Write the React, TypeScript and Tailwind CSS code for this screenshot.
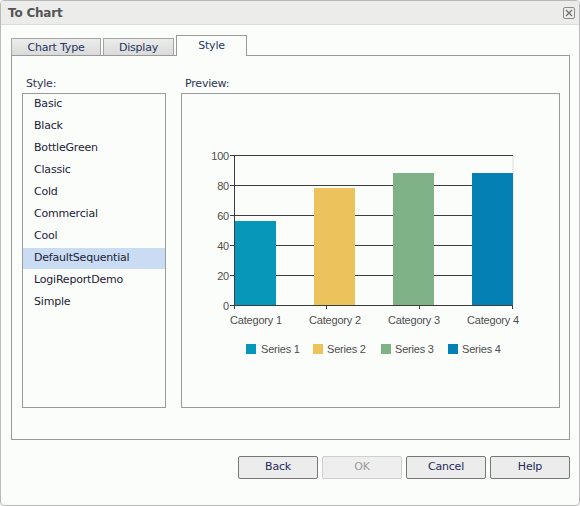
import React from 'react';

const styles = [
  'Basic',
  'Black',
  'BottleGreen',
  'Classic',
  'Cold',
  'Commercial',
  'Cool',
  'DefaultSequential',
  'LogiReportDemo',
  'Simple',
];

const bars = [
  { x: 235, value: 56, color: '#0797b9', label: 'Category 1' },
  { x: 314, value: 78, color: '#ecc25c', label: 'Category 2' },
  { x: 393, value: 88, color: '#80b287', label: 'Category 3' },
  { x: 472, value: 88, color: '#0580b4', label: 'Category 4' },
];

const legend = [
  { x: 246, tx: 261, color: '#0797b9', label: 'Series 1' },
  { x: 313, tx: 327, color: '#ecc25c', label: 'Series 2' },
  { x: 381, tx: 395, color: '#80b287', label: 'Series 3' },
  { x: 448, tx: 462, color: '#0580b4', label: 'Series 4' },
];

function Chart() {
  const y0 = 305;
  const scale = 1.5;
  return (
    <svg width="377" height="313" className="block">
      <g transform="translate(-182 -94)" fontFamily="'Liberation Sans', Arial, sans-serif" fontSize="11" fill="#4d4d4d">
        <line x1="513" y1="155" x2="513" y2="305" stroke="#dddddd" />
        {[0, 20, 40, 60, 80, 100].map((v) => {
          const y = y0 - v * scale + 0.5;
          return (
            <g key={v}>
              <line x1="230" y1={y} x2="513" y2={y} stroke="#3d3d3d" />
              <text x="229" y={y + 4} textAnchor="end">
                {v}
              </text>
            </g>
          );
        })}
        {bars.map((b) => (
          <rect key={b.label} x={b.x} y={y0 - b.value * scale} width="41" height={b.value * scale} fill={b.color} />
        ))}
        <line x1="234.5" y1="155" x2="234.5" y2="305" stroke="#3d3d3d" />
        {[234.5, 326.5, 419.5, 512.5].map((x) => (
          <line key={x} x1={x} y1="305" x2={x} y2="309" stroke="#3d3d3d" />
        ))}
        {bars.map((b) => (
          <text key={b.label} x={b.x + 21} y="324" textAnchor="middle">
            {b.label}
          </text>
        ))}
        {legend.map((l) => (
          <g key={l.label}>
            <rect x={l.x} y="344" width="10" height="10" fill={l.color} />
            <text x={l.tx} y="353">
              {l.label}
            </text>
          </g>
        ))}
      </g>
    </svg>
  );
}

function Tab({ label, active }: { label: string; active?: boolean }) {
  if (active) {
    return (
      <div className="relative z-10 h-[21px] w-[71px] border border-b-0 border-[#9a9a9a] bg-[#fbfdfb] text-center leading-[20px] text-[#1e3560]">
        {label}
      </div>
    );
  }
  return (
    <div className="h-[18px] border border-b-0 border-[#a5a5a5] bg-gradient-to-b from-[#ececec] to-[#d9d9d9] text-center leading-[18px] text-[#1e3560]">
      {label}
    </div>
  );
}

function DialogButton({ label, disabled }: { label: string; disabled?: boolean }) {
  return (
    <button
      type="button"
      disabled={disabled}
      className={
        disabled
          ? 'h-[23px] w-[80px] rounded-[2px] border border-[#cfcfcf] bg-[#eeeeee] text-[#9a9a9a]'
          : 'h-[23px] w-[80px] rounded-[2px] border border-[#767676] bg-[#ececec] text-[#1e2a5a]'
      }
    >
      {label}
    </button>
  );
}

export default function App() {
  return (
    <div
      className="flex h-[506px] w-[580px] flex-col overflow-hidden rounded-[4px] border border-[#b9b9b9] bg-[#fbfdfb] text-[11px] tracking-[-0.2px]"
      style={{ fontFamily: "'DejaVu Sans', Verdana, sans-serif" }}
    >
      <div className="flex h-[24px] shrink-0 items-center justify-between border-b border-[#dcdcdc] bg-[#ececea] pl-[7px] pr-[4px]">
        <span className="text-[12px] font-bold text-[#555555]">To Chart</span>
        <svg width="12" height="12" viewBox="0 0 12 12" className="mt-[1px]">
          <rect x="0.5" y="0.5" width="11" height="11" rx="1.5" fill="none" stroke="#8a8a8a" />
          <path d="M3 3L9 9M9 3L3 9" stroke="#6e6e6e" strokeWidth="1.2" />
        </svg>
      </div>

      <div className="ml-[10px] mt-[10px] flex items-end gap-[2px]">
        <div className="w-[90px]">
          <Tab label="Chart Type" />
        </div>
        <div className="w-[71px]">
          <Tab label="Display" />
        </div>
        <Tab label="Style" active />
      </div>

      <div className="-mt-px ml-[10px] flex h-[385px] w-[559px] gap-[15px] border border-[#9a9a9a] pl-[10px] pt-[20px]">
        <div className="flex flex-col">
          <div className="h-[16px] pl-[4px] leading-[16px] text-[#2b3550]">Style:</div>
          <div className="mt-px h-[315px] w-[144px] border border-[#9a9a9a] bg-[#fbfdfb]">
            {styles.map((s) => (
              <div key={s} className="h-[22px]">
                <div
                  className={
                    s === 'DefaultSequential'
                      ? 'h-[21px] bg-[#cadcf4] pl-[11px] leading-[20px] text-[#1b2236]'
                      : 'h-[21px] pl-[11px] leading-[20px] text-[#1b2236]'
                  }
                >
                  {s}
                </div>
              </div>
            ))}
          </div>
        </div>
        <div className="flex flex-col">
          <div className="h-[16px] pl-[4px] leading-[16px] text-[#2b3550]">Preview:</div>
          <div className="mt-px h-[315px] w-[379px] border border-[#9a9a9a] bg-[#fbfdfb]">
            <Chart />
          </div>
        </div>
      </div>

      <div className="mr-[9px] mt-[16px] flex justify-end gap-[4px]">
        <DialogButton label="Back" />
        <DialogButton label="OK" disabled />
        <DialogButton label="Cancel" />
        <DialogButton label="Help" />
      </div>
    </div>
  );
}
